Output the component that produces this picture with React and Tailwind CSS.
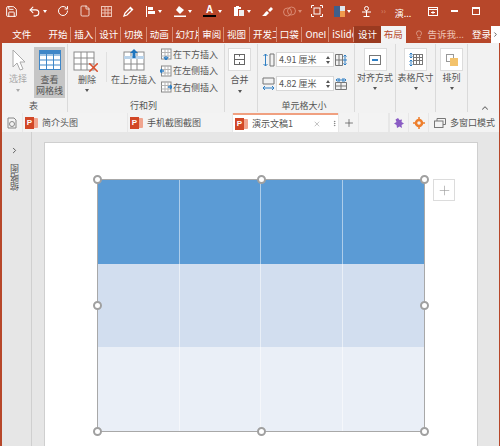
import { Save, Undo2, RotateCw, File, Plus, X, ChevronRight, ChevronUp, EllipsisVertical, Lightbulb } from 'lucide-react';

const FONT = "font-['Noto_Sans_CJK_SC','Noto_Sans','Liberation_Sans',sans-serif]";

const TABS = [
  { label: '开始', w: 'w-[26px]' },
  { label: '插入', w: 'w-[25px]' },
  { label: '设计', w: 'w-[25px]' },
  { label: '切换', w: 'w-[26px]' },
  { label: '动画', w: 'w-[26px]' },
  { label: '幻灯片', w: 'w-[27px]' },
  { label: '审阅', w: 'w-[25px]' },
  { label: '视图', w: 'w-[26px]' },
  { label: '开发工具', w: 'w-[27px]' },
  { label: '口袋', w: 'w-[26px]' },
  { label: 'OneI', w: 'w-[27px]' },
  { label: 'iSlide', w: 'w-[25px]' },
];

function Caret({ className = 'border-t-[#666]' }) {
  return <span className={`inline-block w-0 h-0 border-x-[2.5px] border-x-transparent border-t-[3px] ${className}`} />;
}

function GridIcon({ className, stroke = '#8a8a8a', size = 22 }) {
  return (
    <svg width={size} height={size} viewBox="0 0 22 22" className={className} fill="none" stroke={stroke} strokeWidth="1">
      <rect x="1" y="2" width="20" height="18" fill="#fff" />
      <path d="M1 8h20M1 14h20M8 2v18M14 2v18" />
    </svg>
  );
}

function SmallInsert({ dir }) {
  return (
    <svg width="12" height="12" viewBox="0 0 12 12" fill="none">
      <rect x="1.500" y="1" width="9.500" height="10" fill="#fff" stroke="#8a8a8a" />
      <path d="M1.500 4.500h9.500M1.500 8h9.500M5 1v10M8 1v10" stroke="#b5b5b5" />
      {dir === 'down' && <path d="M6 12V8M4 9l2 3 2-3" stroke="#2f7fc4" strokeWidth="1.300" />}
      {dir === 'left' && <path d="M0 6h4M2 4l-2 2 2 2" stroke="#2f7fc4" strokeWidth="1.300" />}
      {dir === 'right' && <path d="M8 6h4M10 4l2 2-2 2" stroke="#2f7fc4" strokeWidth="1.300" />}
    </svg>
  );
}

function RibbonBtn({ children }) {
  return <div className="w-[23px] h-[23px] bg-white border border-[#dcdcdc] flex items-center justify-center">{children}</div>;
}

function SizeInput({ value }) {
  return (
    <div className="w-[58px] h-[15px] bg-white border border-[#d8d8d8] flex items-center pl-[2px] text-[9px] text-[#555] leading-none">
      <span className="flex-1 whitespace-nowrap">{value} 厘米</span>
      <span className="flex flex-col gap-[2px] pr-[3px]">
        <Caret className="border-t-[#555] rotate-180" />
        <Caret className="border-t-[#555]" />
      </span>
    </div>
  );
}

function PptIcon() {
  return (
    <span className="relative inline-block w-[13px] h-[12px] shrink-0">
      <span className="absolute right-0 top-[1px] w-[7px] h-[10px] bg-[#f0a58f] rounded-[1px]" />
      <span className="absolute left-0 top-0 w-[9px] h-[12px] bg-[#d24726] text-white text-[8px] leading-[12px] text-center font-bold font-['Liberation_Sans']">P</span>
    </span>
  );
}

function Handle({ className }) {
  return <span className={`absolute w-[9px] h-[9px] rounded-full bg-white border-2 border-[#a0a0a0] ${className}`} />;
}

function TitleBar() {
  return (
    <div className="h-[26px] flex items-center text-white pl-[5px] pb-[4px]">
      <Save size={13} strokeWidth={1.800} />
      <Undo2 size={13} strokeWidth={2} className="ml-[10px]" />
      <span className="ml-[2px] flex"><Caret className="border-t-white" /></span>
      <RotateCw size={12} strokeWidth={2} className="ml-[10px]" />
      <File size={12} strokeWidth={1.500} className="ml-[10px]" />
      <svg width="11" height="11" viewBox="0 0 11 11" className="ml-[10px]" fill="none" stroke="#eec4b6" strokeWidth="1"><rect x=".5" y=".5" width="10" height="10" /><path d="M4 .5v10M7 .5v10M.5 4h10M.5 7h10" /></svg>
      <svg width="11" height="11" viewBox="0 0 11 11" className="ml-[11px]" fill="none" stroke="#fff" strokeWidth="1.300"><path d="M1 10l1-3 5-5 2 2-5 5zM7 1l3 3" /></svg>
      <svg width="11" height="11" viewBox="0 0 11 11" className="ml-[11px]" fill="#fff"><path d="M1 0h1v11H1zM3 1h5v3H3zM3 5h7v3H3z" /></svg>
      <span className="ml-[2px] flex"><Caret className="border-t-white" /></span>
      <svg width="12" height="12" viewBox="0 0 12 12" className="ml-[12px]" fill="#fff"><path d="M5 1l5 4-4 4-4-4zM0 10.500h12V12H0z" /></svg>
      <span className="ml-[2px] flex"><Caret className="border-t-white" /></span>
      <span className="ml-[11px] w-[13px] flex flex-col items-center leading-none">
        <span className="text-[10px] leading-[10px] font-bold font-['Liberation_Sans']">A</span>
        <span className="w-[13px] h-[2px] bg-black" />
      </span>
      <span className="ml-[2px] flex"><Caret className="border-t-white" /></span>
      <svg width="12" height="12" viewBox="0 0 12 12" className="ml-[11px]" fill="#fff"><path d="M1 2h2V1h3v1h2v2H5v7H1z" /><path d="M6 5h5v6H6z" fill="#eee" /></svg>
      <span className="ml-[2px] flex"><Caret className="border-t-white" /></span>
      <svg width="11" height="11" viewBox="0 0 11 11" className="ml-[11px]" fill="#fff"><path d="M6 4l3-3 2 2-3 3zM5 5l2 2-3 3H0c2-1 2-3 5-5z" /></svg>
      <svg width="13" height="11" viewBox="0 0 13 11" className="ml-[10px]" fill="none" stroke="#d98a73" strokeWidth="1"><circle cx="4.500" cy="6" r="4" /><circle cx="8.500" cy="5" r="4" /></svg>
      <span className="ml-[2px] flex"><Caret className="border-t-[#d98a73]" /></span>
      <svg width="12" height="12" viewBox="0 0 12 12" className="ml-[9px]" fill="none" stroke="#fff" strokeWidth="1"><path d="M.5 3V.5H3M9 .5h2.500V3M11.500 9v2.500H9M3 11.500H.5V9" /><rect x="3" y="3" width="6" height="6" /></svg>
      <span className="ml-[11px] w-[11px] h-[11px] grid grid-cols-2 grid-rows-2">
        <span className="bg-[#3f5f8a]" /><span className="bg-[#dfe6ee]" /><span className="bg-[#3f5f8a]" /><span className="bg-[#ef9a4d]" />
      </span>
      <span className="ml-[2px] flex"><Caret className="border-t-white" /></span>
      <svg width="9" height="11" viewBox="0 0 9 11" className="ml-[11px]" fill="none" stroke="#fff" strokeWidth="1"><circle cx="4.500" cy="2.500" r="2" /><path d="M0 6h9M4.500 4.500V10M1.500 10.500h6" /></svg>
      <span className="ml-[10px] text-[8px] leading-none text-[#d98a73]">››</span>
      <span className="ml-[9px] mt-[4px] text-[9px] leading-none whitespace-nowrap">演...</span>
      <svg width="10" height="9" viewBox="0 0 10 9" className="ml-[17px]" fill="none" stroke="#fff" strokeWidth="1"><rect x=".5" y=".5" width="9" height="8" /><path d="M.5 2.500h9M3 5.500h4M5 4v3" /></svg>
      <span className="ml-[13px] w-[7px] h-[1.500px] bg-white" />
      <span className="ml-[14px] w-[8px] h-[8px] border border-white border-t-2" />
    </div>
  );
}

function TabRow() {
  return (
    <div className="h-[17px] flex items-stretch text-white text-[9.500px] leading-none">
      <div className="w-[46px] flex items-center justify-center pr-[2px]">文件</div>
      {TABS.map(t => (
        <div key={t.label + t.w} className={`${t.w} border-r border-[#d68a73] flex items-center pl-[3px] my-[1px] overflow-hidden whitespace-nowrap`}>{t.label}</div>
      ))}
      <div className="w-[27px] bg-[#9a3a20] flex items-center justify-center">设计</div>
      <div className="w-[25px] bg-[#f3f3f3] text-[#b7472a] flex items-center justify-center">布局</div>
      <Lightbulb size={10} strokeWidth={1.500} className="ml-[8px] self-center text-[#eec4b6] shrink-0" />
      <span className="ml-[4px] self-center text-[#eec4b6] whitespace-nowrap">告诉我...</span>
      <span className="ml-[8px] self-center whitespace-nowrap">登录</span>
      <div className="ml-auto w-[9px] shrink-0 bg-white flex items-center justify-center"><ChevronRight size={7} strokeWidth={3} className="text-[#555]" /></div>
    </div>
  );
}

function Ribbon() {
  return (
    <div className="h-[70px] bg-[#f2f2f2] flex text-[9px] leading-[11px] text-[#555] relative">
      {/* 表 */}
      <div className="w-[66px] border-r border-[#dadada] flex flex-col my-[1px]">
        <div className="flex flex-1 pt-[3px]">
          <div className="w-[32px] flex flex-col items-center text-[#aaa]">
            <svg width="15" height="24" viewBox="0 0 15 24" className="mt-[2px] ml-[1px]" fill="#fff" stroke="#aaa" strokeWidth="1"><path d="M2 1v17l4-4 3 7 3-1-3-7h5z" /></svg>
            <span>选择</span>
            <Caret className="mt-[5px] border-t-[#aaa]" />
          </div>
          <div className="w-[31px] h-[51px] bg-[#c6c6c6] flex flex-col items-center">
            <svg width="22" height="20" viewBox="0 0 22 20" className="mt-[3px]" fill="none" stroke="#3f87c8" strokeWidth="1">
              <rect x=".5" y=".5" width="21" height="19" fill="#fff" />
              <path d="M.5 5h21M.5 10h21M.5 15h21M7.500 .5v19M14.500 .5v19" />
              <path d="M.5 2.500h21" strokeWidth="3" />
            </svg>
            <span className="mt-[4px]">查看</span>
            <span>网格线</span>
          </div>
        </div>
        <div className="text-center pb-[1px] pr-[2px]">表</div>
      </div>
      {/* 行和列 */}
      <div className="w-[157px] border-r border-[#dadada] flex flex-col my-[1px]">
        <div className="flex flex-1 pt-[6px]">
          <div className="w-[38px] flex flex-col items-center">
            <div className="relative w-[24px] h-[22px]">
              <GridIcon className="ml-[-2px]" />
              <X size={15} strokeWidth={2.500} className="absolute -right-[2px] bottom-[-3px] text-[#d9502e]" />
            </div>
            <span className="mt-[2px]">删除</span>
            <Caret className="mt-[4px]" />
          </div>
          <div className="w-px h-[30px] mt-[2px] bg-[#e0e0e0]" />
          <div className="w-[53px] flex flex-col items-center">
            <div className="relative w-[22px] h-[22px]">
              <GridIcon />
              <span className="absolute left-[1px] top-[6px] w-[20px] h-[3px] bg-[#b9d3ea]" />
              <svg width="8" height="9" viewBox="0 0 8 9" className="absolute left-[7px] -top-[1px]" fill="#1f75bd"><path d="M4 0l4 4H5.500v5h-3V4H0z" /></svg>
            </div>
            <span className="mt-[2px] whitespace-nowrap">在上方插入</span>
          </div>
          <div className="flex flex-col gap-[4px] -mt-[2px]">
            {[['down', '在下方插入'], ['left', '在左侧插入'], ['right', '在右侧插入']].map(([d, t]) => (
              <div key={d} className="flex items-center gap-[1px] h-[12.500px] whitespace-nowrap"><SmallInsert dir={d} />{t}</div>
            ))}
          </div>
        </div>
        <div className="text-center pb-[1px] pr-[5px]">行和列</div>
      </div>
      {/* 合并 */}
      <div className="w-[33px] border-r border-[#dadada] flex flex-col items-center my-[1px] pt-[4px] pr-[3px]">
        <RibbonBtn>
          <svg width="11" height="11" viewBox="0 0 11 11" fill="none" stroke="#666"><rect x=".5" y=".5" width="10" height="10" /><path d="M.5 5.500h10" /><path d="M5.500 .5v2M5.500 8v2.500" /></svg>
        </RibbonBtn>
        <span className="mt-[3px]">合并</span>
        <Caret className="mt-[5px]" />
      </div>
      {/* 单元格大小 */}
      <div className="w-[97px] border-r border-[#dadada] flex flex-col my-[1px]">
        <div className="flex-1 flex flex-col gap-[9px] pt-[8px] pl-[4px]">
          <div className="flex items-center gap-[1px]">
            <svg width="13" height="14" viewBox="0 0 13 14" fill="none" stroke="#777"><path d="M8 1h4v12H8z" /><path d="M3.500 1v12M1.500 3l2-2 2 2M1.500 11l2 2 2-2" stroke="#2f7fc4" /></svg>
            <SizeInput value="4.91" />
            <svg width="12" height="12" viewBox="0 0 12 12" fill="none" stroke="#777"><path d="M.5 .5h7v11h-7zM.5 6h7M4 .5v11" /><path d="M10 1v10M8.500 2.500L10 1l1.500 1.500M8.500 9.500L10 11l1.500-1.500M8 6h4" stroke="#2f7fc4" /></svg>
          </div>
          <div className="flex items-center gap-[1px]">
            <svg width="13" height="14" viewBox="0 0 13 14" fill="none" stroke="#777"><path d="M1 1h11v6H1z" /><path d="M1 11h11M3 9l-2 2 2 2M10 9l2 2-2 2" stroke="#2f7fc4" /></svg>
            <SizeInput value="4.82" />
            <svg width="12" height="12" viewBox="0 0 12 12" fill="none" stroke="#777"><path d="M.5 4.500h11v7H.5zM6 4.500v7M.5 8h11" /><path d="M1 2h10M2.500 .5L1 2l1.500 1.500M9.500 .5L11 2 9.500 3.500M4 0v4M8 0v4" stroke="#2f7fc4" /></svg>
          </div>
        </div>
        <div className="text-center pb-[1px] pr-[4px]">单元格大小</div>
      </div>
      {/* 对齐方式 */}
      <div className="w-[41px] border-r border-[#dadada] flex flex-col items-center my-[1px] pt-[4px]">
        <RibbonBtn>
          <svg width="12" height="10" viewBox="0 0 12 10" fill="none" stroke="#777"><rect x=".5" y=".5" width="11" height="9" /><path d="M3 5h6" stroke="#2f7fc4" strokeWidth="2" /></svg>
        </RibbonBtn>
        <span className="mt-[1px] whitespace-nowrap">对齐方式</span>
        <Caret className="mt-[4px]" />
      </div>
      {/* 表格尺寸 */}
      <div className="w-[40px] border-r border-[#dadada] flex flex-col items-center my-[1px] pt-[4px]">
        <RibbonBtn>
          <svg width="14" height="13" viewBox="0 0 14 13" fill="none" stroke="#777"><rect x="4.500" y="1.500" width="9" height="10" /><path d="M4.500 4.500h9M4.500 7.500h9M7.500 1.500v10M10.500 1.500v10" /><path d="M2 0v5M.5 1.500L2 0l1.500 1.500M.5 3.500L2 5l1.500-1.500M2 7v6M.5 8.500L2 7l1.500 1.500M.5 11.500L2 13l1.500-1.500" stroke="#2f7fc4" /></svg>
        </RibbonBtn>
        <span className="mt-[1px] whitespace-nowrap">表格尺寸</span>
        <Caret className="mt-[4px]" />
      </div>
      {/* 排列 */}
      <div className="w-[32px] border-r border-[#dadada] flex flex-col items-center my-[1px] pt-[4px]">
        <RibbonBtn>
          <span className="relative w-[12px] h-[12px]">
            <span className="absolute left-0 top-0 w-[8px] h-[8px] border border-[#999] bg-white" />
            <span className="absolute right-0 bottom-0 w-[8px] h-[8px] bg-[#f3c26b]" />
          </span>
        </RibbonBtn>
        <span className="mt-[1px]">排列</span>
        <Caret className="mt-[4px]" />
      </div>
      <ChevronUp size={10} strokeWidth={2.500} className="absolute right-[9px] bottom-[0px] text-[#666]" />
    </div>
  );
}

function DocTabs() {
  return (
    <div className="h-[19px] bg-[#e7e7e7] flex gap-px text-[9px] text-[#555] leading-none whitespace-nowrap">
      <div className="w-[20px] bg-[#f3f3f3] flex items-center justify-center">
        <svg width="12" height="12" viewBox="0 0 12 12" fill="none" stroke="#888"><path d="M2 1h6l2 2v8H2z" /><circle cx="6" cy="7" r="2.500" /></svg>
      </div>
      <div className="w-[104px] bg-[#f3f3f3] flex items-center gap-[4px] pl-[2px]"><PptIcon />简介头图</div>
      <div className="w-[104px] bg-[#f3f3f3] flex items-center gap-[4px] pl-[2px]"><PptIcon />手机截图截图</div>
      <div className="w-[105px] bg-white border-t-2 border-[#f0a080] flex items-center gap-[4px] pl-[2px]">
        <PptIcon />
        <span>演示文稿1</span>
        <X size={10} strokeWidth={1.200} className="ml-[16px] text-[#666]" />
        <EllipsisVertical size={9} className="ml-[6px] text-[#666]" />
      </div>
      <div className="w-[19px] bg-[#f3f3f3] flex items-center justify-center"><Plus size={12} strokeWidth={1.500} className="text-[#555]" /></div>
      <div className="w-[29px] bg-[#f3f3f3]" />
      <div className="w-[18px] bg-[#f3f3f3] flex items-center justify-center ml-px">
        <svg width="12" height="12" viewBox="0 0 12 12" fill="#8a5cc4"><path d="M5 1l1.500 2L9 2.500 8.500 5 11 6.500 8.500 8 9 11 6.500 9.500 4 11 3.500 8 1 6.500 3.500 5 2.500 2.500z" /></svg>
      </div>
      <div className="w-[19px] bg-[#f3f3f3] flex items-center justify-center">
        <svg width="12" height="12" viewBox="0 0 12 12" fill="none" stroke="#ee7f2d" strokeWidth="2.500"><circle cx="6" cy="6" r="3" /><path d="M6 0v2M6 10v2M0 6h2M10 6h2" strokeWidth="1.500" /></svg>
      </div>
      <div className="flex-1 bg-[#f3f3f3] flex items-center gap-[4px] pl-[5px]">
        <svg width="12" height="10" viewBox="0 0 12 10" fill="none" stroke="#777"><path d="M3 3V.5h8.500v6H9" /><rect x=".5" y="3" width="8.500" height="6.500" /></svg>
        多窗口模式
      </div>
    </div>
  );
}

function Slide() {
  const fills = ['bg-[#5b9bd5]', 'bg-[#d2deef]', 'bg-[#eaeff7]'];
  return (
    <div className="flex-1 bg-[#e6e6e6] pl-[12px] pt-[10px] pr-[21px] overflow-hidden">
      <div className="h-[400px] bg-white border border-[#cfcfcf] pl-[52px] pt-[36px] relative">
        <div className="relative w-[328px] h-[253px] border border-[#a8a8a8]">
          <div className="w-full h-full grid grid-cols-4 grid-rows-3">
            {fills.flatMap(fill => [0, 1, 2, 3].map(c => (
              <div key={fill + c} className={`${fill} ${c < 3 ? 'border-r border-white/50' : ''}`} />
            )))}
          </div>
          <Handle className="-left-[5px] -top-[5px]" />
          <Handle className="left-[159px] -top-[5px]" />
          <Handle className="-right-[5px] -top-[5px]" />
          <Handle className="-left-[5px] top-[121px]" />
          <Handle className="-right-[5px] top-[121px]" />
          <Handle className="-left-[5px] -bottom-[5px]" />
          <Handle className="left-[159px] -bottom-[5px]" />
          <Handle className="-right-[5px] -bottom-[5px]" />
          <div className="absolute -right-[31px] -top-[1px] w-[22px] h-[22px] bg-white border border-[#dcdcdc] flex items-center justify-center">
            <Plus size={15} strokeWidth={1} className="text-[#999]" />
          </div>
        </div>
      </div>
    </div>
  );
}

export default function App() {
  return (
    <div className={`w-[500px] h-[446px] overflow-hidden bg-[#b7472a] flex flex-col ${FONT}`}>
      <TitleBar />
      <TabRow />
      <div className="flex-1 flex flex-col ml-[2px] mr-[1px] bg-[#e6e6e6] min-h-0">
        <Ribbon />
        <DocTabs />
        <div className="flex-1 flex min-h-0">
          <div className="w-[30px] bg-[#e6e6e6] border-r border-[#cfcfcf] flex flex-col items-center pt-[14px] pr-[4px] text-[#555]">
            <ChevronRight size={9} strokeWidth={2.500} />
            <span className="mt-[9px] text-[9px] leading-none [writing-mode:vertical-rl] rotate-180">缩略图</span>
          </div>
          <Slide />
        </div>
      </div>
    </div>
  );
}
